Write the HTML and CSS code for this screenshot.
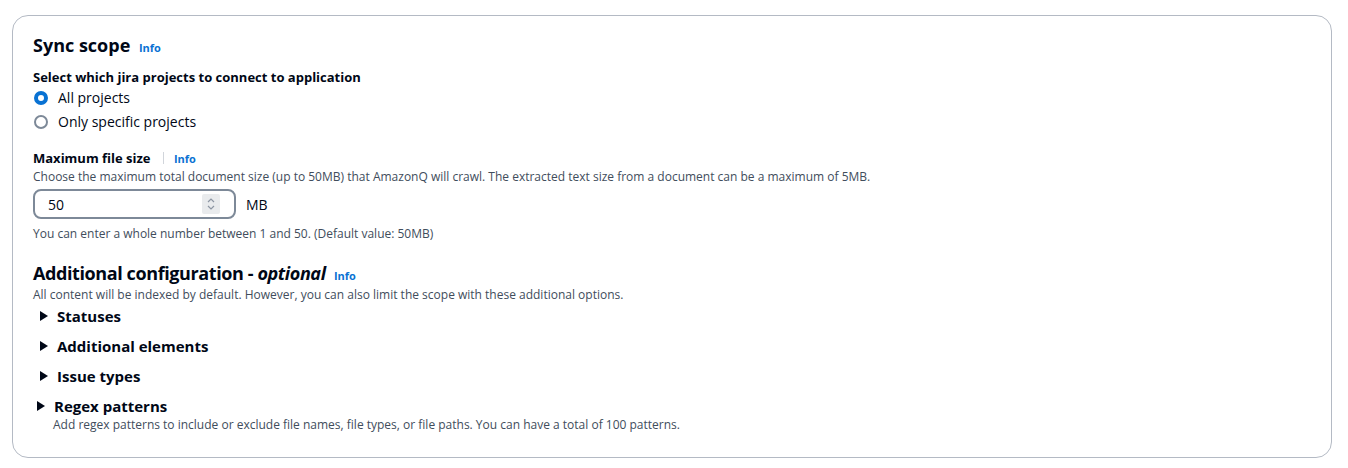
FILE: index.html
```html
<!DOCTYPE html>
<html lang="en">

<head>
    <meta charset="UTF-8">
    <title>Sync scope</title>

    <link rel="stylesheet" href="styles.css">
</head>

<body>
    <div class="card">
        <h2 class="heading">Sync scope <a class="info" href="#">Info</a></h2>

        <div class="field">
            <div class="label radio-label">Select which jira projects to connect to application</div>
            <label class="radio"><span class="dot checked"></span>All projects</label>
            <label class="radio"><span class="dot"></span>Only specific projects</label>
        </div>

        <div class="field size-field">
            <div class="label">Maximum file size <span class="divider"></span><a class="info" href="#">Info</a></div>
            <div class="desc">Choose the maximum total document size (up to 50MB) that AmazonQ will crawl. The extracted text size from a document can be a maximum of 5MB.</div>
            <div class="input-row">
                <div class="number-input">
                    <span>50</span>
                    <span class="spinner">
                        <svg width="10" height="14" viewBox="0 0 10 14">
                            <path d="M2 5 L5 2 L8 5" fill="none" stroke="#8d96a3" stroke-width="1.2" />
                            <path d="M2 9 L5 12 L8 9" fill="none" stroke="#8d96a3" stroke-width="1.2" />
                        </svg>
                    </span>
                </div>
                <span class="unit">MB</span>
            </div>
            <div class="desc hint">You can enter a whole number between 1 and 50. (Default value: 50MB)</div>
        </div>

        <h2 class="heading sub">Additional configuration - <em>optional</em> <a class="info" href="#">Info</a></h2>
        <div class="desc sub-desc">All content will be indexed by default. However, you can also limit the scope with these additional options.</div>

        <ul class="sections">
            <li class="section"><span class="caret"></span>Statuses</li>
            <li class="section"><span class="caret"></span>Additional elements</li>
            <li class="section"><span class="caret"></span>Issue types</li>
            <li class="section regex"><span class="caret"></span>Regex patterns</li>
        </ul>
        <div class="desc regex-desc">Add regex patterns to include or exclude file names, file types, or file paths. You can have a total of 100 patterns.</div>
    </div>
</body>

</html>
```

FILE: styles.css
```css
body {
    margin: 0;
    padding: 15px 16px 0 12px;
    background-color: #ffffff;
    color: #000716;
    font-family: 'Open Sans', 'Noto Sans', sans-serif;
}

.card {
    box-sizing: border-box;
    border: 1px solid #b4bac4;
    border-radius: 16px;
    height: 443px;
    padding: 16px 20px 0 20px;
}

.heading {
    margin: 0;
    font-size: 18px;
    font-weight: 700;
    line-height: 26px;
}

.heading em {
    font-style: italic;
}

.info {
    color: #0972d3;
    font-size: 11px;
    font-weight: 700;
    text-decoration: none;
    margin-left: 4px;
}

.field {
    margin-top: 6px;
}

.label {
    font-size: 13px;
    font-weight: 700;
    line-height: 20px;
}

.radio-label {
    margin-bottom: -1px;
}

.radio {
    display: flex;
    align-items: center;
    gap: 10px;
    font-size: 14px;
    line-height: 24px;
    padding-left: 1px;
}

.dot {
    width: 10px;
    height: 10px;
    border: 2px solid #7d8998;
    border-radius: 50%;
    box-sizing: content-box;
}

.dot.checked {
    width: 6px;
    height: 6px;
    border: 4px solid #0972d3;
}

.size-field {
    margin-top: 14px;
}

.divider {
    display: inline-block;
    width: 1px;
    height: 12px;
    background-color: #d1d5db;
    margin: 0 10px 0 9px;
    vertical-align: -1px;
}

.divider + .info {
    margin-left: 0;
}

.desc {
    font-size: 12px;
    color: #414d5c;
    line-height: 16px;
}

.input-row {
    display: flex;
    align-items: center;
    gap: 10px;
    margin-top: 4px;
}

.number-input {
    width: 203px;
    height: 30px;
    box-sizing: border-box;
    border: 2px solid #7d8998;
    border-radius: 8px;
    display: flex;
    align-items: center;
    justify-content: space-between;
    padding: 0 14px 0 13px;
    font-size: 14px;
}

.spinner {
    display: flex;
    align-items: center;
    justify-content: center;
    width: 18px;
    height: 20px;
    background-color: #e9ebed;
    border-radius: 2px;
}

.unit {
    font-size: 14px;
}

.hint {
    margin-top: 7px;
}

.sub {
    margin-top: 18px;
    letter-spacing: -0.4px;
}

.sub .info {
    letter-spacing: 0;
}

.sub-desc {
    margin-top: -2px;
}

.sections {
    list-style: none;
    margin: -2px 0 0 0;
    padding: 0;
}

.section {
    display: flex;
    align-items: center;
    font-size: 15px;
    font-weight: 700;
    line-height: 30px;
    padding-left: 7px;
}

.caret {
    width: 0;
    height: 0;
    border-top: 5px solid transparent;
    border-bottom: 5px solid transparent;
    border-left: 8px solid #000716;
    margin-right: 9px;
}

.section.regex {
    padding-left: 4px;
    line-height: 22px;
    margin-top: 4px;
}

.regex-desc {
    padding-left: 20px;
}
```
